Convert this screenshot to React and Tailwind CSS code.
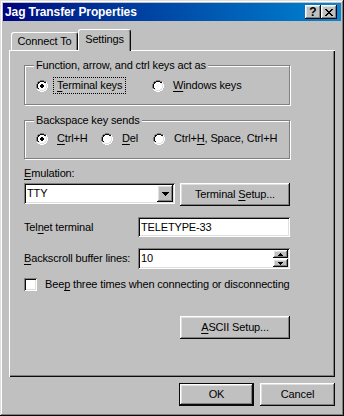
import React from "react";

const raised =
  "shadow-[inset_-1px_-1px_#0a0a0a,inset_1px_1px_#ffffff,inset_-2px_-2px_#808080,inset_2px_2px_#dfdfdf]";
const sunken =
  "shadow-[inset_1px_1px_#808080,inset_-1px_-1px_#ffffff,inset_2px_2px_#0a0a0a,inset_-2px_-2px_#dfdfdf]";

const COLORS = { g: "#808080", k: "#0a0a0a", w: "#ffffff", l: "#dfdfdf", W: "#ffffff", d: "#000000", x: "#000000" };

// tiny pixel drawings (radio, arrows, close glyph)
const Pixels = ({ rows, className = "" }) => (
  <svg
    width={rows[0].length}
    height={rows.length}
    shapeRendering="crispEdges"
    className={`block shrink-0 ${className}`}
  >
    {rows.flatMap((r, y) =>
      [...r].map((c, x) =>
        COLORS[c] ? <rect key={`${x}-${y}`} x={x} y={y} width="1" height="1" fill={COLORS[c]} /> : null
      )
    )}
  </svg>
);

const radioRows = (checked) => {
  const rows = [
    "....gggg....",
    "..ggkkkkgg..",
    ".gkkWWWWkkw.",
    ".gkWWWWWWlw.",
    "gkWWWWWWWWlw",
    "gkWWWWWWWWlw",
    "gkWWWWWWWWlw",
    "gkWWWWWWWWlw",
    ".gkWWWWWWlw.",
    ".wllWWWWllw.",
    "..wwllllww..",
    "....wwww....",
  ];
  if (!checked) return rows;
  return rows.map((r, y) => {
    if (y === 4 || y === 7) return r.slice(0, 5) + "dd" + r.slice(7);
    if (y === 5 || y === 6) return r.slice(0, 4) + "dddd" + r.slice(8);
    return r;
  });
};

const closeRows = ["xx....xx", ".xx..xx.", "..xxxx..", "...xx...", "..xxxx..", ".xx..xx.", "xx....xx"];
const downRows = ["xxxxxxx", ".xxxxx.", "..xxx..", "...x..."];
const spinUp = ["..x..", ".xxx.", "xxxxx"];
const spinDown = ["xxxxx", ".xxx.", "..x.."];

const U = ({ children }) => <span className="underline underline-offset-[2px]">{children}</span>;

const TitleButton = ({ children }) => (
  <div className={`w-[16px] h-[14px] bg-[#c0c0c0] flex items-center justify-center ${raised}`}>{children}</div>
);

const Group = ({ label, className = "", children }) => (
  <div className={`relative w-[266px] border border-[#808080] shadow-[inset_1px_1px_#ffffff,1px_1px_#ffffff] ${className}`}>
    <span className="absolute left-[9px] top-[-7px] bg-[#c0c0c0] px-[2px] leading-[13px]">{label}</span>
    {children}
  </div>
);

const RadioItem = ({ checked, focus, className = "", children }) => (
  <div className={`flex items-center ${className}`}>
    <Pixels rows={radioRows(checked)} />
    <span
      className={`ml-[5px] px-[3px] leading-[15px] border ${focus ? "border-dotted border-black" : "border-transparent"}`}
    >
      {children}
    </span>
  </div>
);

const Button = ({ className = "", children }) => (
  <div className={`h-[23px] bg-[#c0c0c0] flex items-center justify-center ${raised} ${className}`}>
    <span>{children}</span>
  </div>
);

export default function App() {
  return (
    <div
      className={`w-[344px] h-[416px] bg-[#c0c0c0] p-[3px] text-[11px] tracking-[-0.15px] text-black font-['Liberation_Sans',Arial,sans-serif] shadow-[inset_-1px_-1px_#0a0a0a,inset_1px_1px_#dfdfdf,inset_-2px_-2px_#808080,inset_2px_2px_#ffffff]`}
    >
      <div className="h-[18px] flex items-center bg-linear-to-r from-[#000080] to-[#1084d0] pl-[2px] pr-[4px]">
        <span className="text-white font-bold text-[12px] tracking-[-0.1px] leading-none">Jag Transfer Properties</span>
        <div className="ml-auto flex">
          <TitleButton>
            <span className="font-bold text-[12px] leading-none tracking-normal">?</span>
          </TitleButton>
          <TitleButton>
            <Pixels rows={closeRows} />
          </TitleButton>
        </div>
      </div>

      <div className="px-[6px]">
        <div className="mt-[8px] h-[21px] flex items-end pl-[2px]">
          <div className="w-[67px] h-[18px] border-t border-l border-white border-r border-r-[#0a0a0a] rounded-t-[3px] shadow-[inset_-1px_0_#808080] flex items-center justify-center leading-none">
            Connect To
          </div>
          <div className="relative z-10 w-[53px] h-[22px] mb-[-1px] bg-[#c0c0c0] border-t border-l border-white border-r border-r-[#0a0a0a] rounded-t-[3px] shadow-[inset_-1px_0_#808080] flex items-center justify-center pb-[3px] leading-none">
            Settings
          </div>
        </div>

        <div className="h-[327px] pt-[15px] pl-[15px] shadow-[inset_1px_1px_#ffffff,inset_-1px_-1px_#0a0a0a,inset_-2px_-2px_#808080]">
          <Group label="Function, arrow, and ctrl keys act as" className="h-[40px] pt-[11px] pl-[11px]">
            <div className="flex h-[17px] items-center">
              <RadioItem checked focus className="w-[116px]">
                <U>T</U>erminal keys
              </RadioItem>
              <RadioItem>
                <U>W</U>indows keys
              </RadioItem>
            </div>
          </Group>

          <Group label="Backspace key sends" className="mt-[15px] h-[39px] pt-[9px] pl-[11px]">
            <div className="flex h-[17px] items-center">
              <RadioItem checked className="w-[65px]">
                <U>C</U>trl+H
              </RadioItem>
              <RadioItem className="w-[52px]">
                <U>D</U>el
              </RadioItem>
              <RadioItem>
                Ctrl+<U>H</U>, Space, Ctrl+H
              </RadioItem>
            </div>
          </Group>

          <div className="mt-[8px] leading-[13px]">
            <U>E</U>mulation:
          </div>
          <div className="mt-[3px] flex items-start">
            <div className={`w-[151px] h-[21px] bg-white p-[2px] flex items-center ${sunken}`}>
              <span className="pl-[1px] leading-none">TTY</span>
              <div className={`ml-auto w-[16px] h-[17px] bg-[#c0c0c0] flex items-center justify-center ${raised}`}>
                <Pixels rows={downRows} />
              </div>
            </div>
            <Button className="ml-[5px] w-[110px]">
              Terminal <U>S</U>etup...
            </Button>
          </div>

          <div className="mt-[11px] flex items-center">
            <span className="w-[114px]">
              Tel<U>n</U>et terminal
            </span>
            <div className={`w-[152px] h-[20px] bg-white p-[2px] pl-[3px] flex items-center leading-none ${sunken}`}>
              TELETYPE-33
            </div>
          </div>

          <div className="mt-[11px] flex items-center">
            <span className="w-[114px]">
              <U>B</U>ackscroll buffer lines:
            </span>
            <div className={`w-[152px] h-[21px] bg-white p-[2px] pl-[3px] flex items-center leading-none ${sunken}`}>
              <span>10</span>
              <div className="ml-auto flex flex-col gap-[1px]">
                <div className={`w-[15px] h-[8px] bg-[#c0c0c0] flex items-center justify-center ${raised}`}>
                  <Pixels rows={spinUp} />
                </div>
                <div className={`w-[15px] h-[8px] bg-[#c0c0c0] flex items-center justify-center ${raised}`}>
                  <Pixels rows={spinDown} />
                </div>
              </div>
            </div>
          </div>

          <div className="mt-[9px] flex items-center h-[13px]">
            <div className={`w-[13px] h-[13px] bg-white ${sunken}`} />
            <span className="ml-[8px] leading-none">
              Bee<U>p</U> three times when connecting or disconnecting
            </span>
          </div>

          <Button className="mt-[25px] ml-[156px] w-[110px]">
            <U>A</U>SCII Setup...
          </Button>
        </div>

        <div className="mt-[6px] flex justify-end gap-[6px]">
          <div className="w-[75px] h-[23px] flex items-center justify-center shadow-[inset_0_0_0_1px_#0a0a0a,inset_-2px_-2px_#0a0a0a,inset_2px_2px_#ffffff,inset_-3px_-3px_#808080,inset_3px_3px_#dfdfdf]">
            OK
          </div>
          <Button className="w-[75px]">Cancel</Button>
        </div>
      </div>
    </div>
  );
}
